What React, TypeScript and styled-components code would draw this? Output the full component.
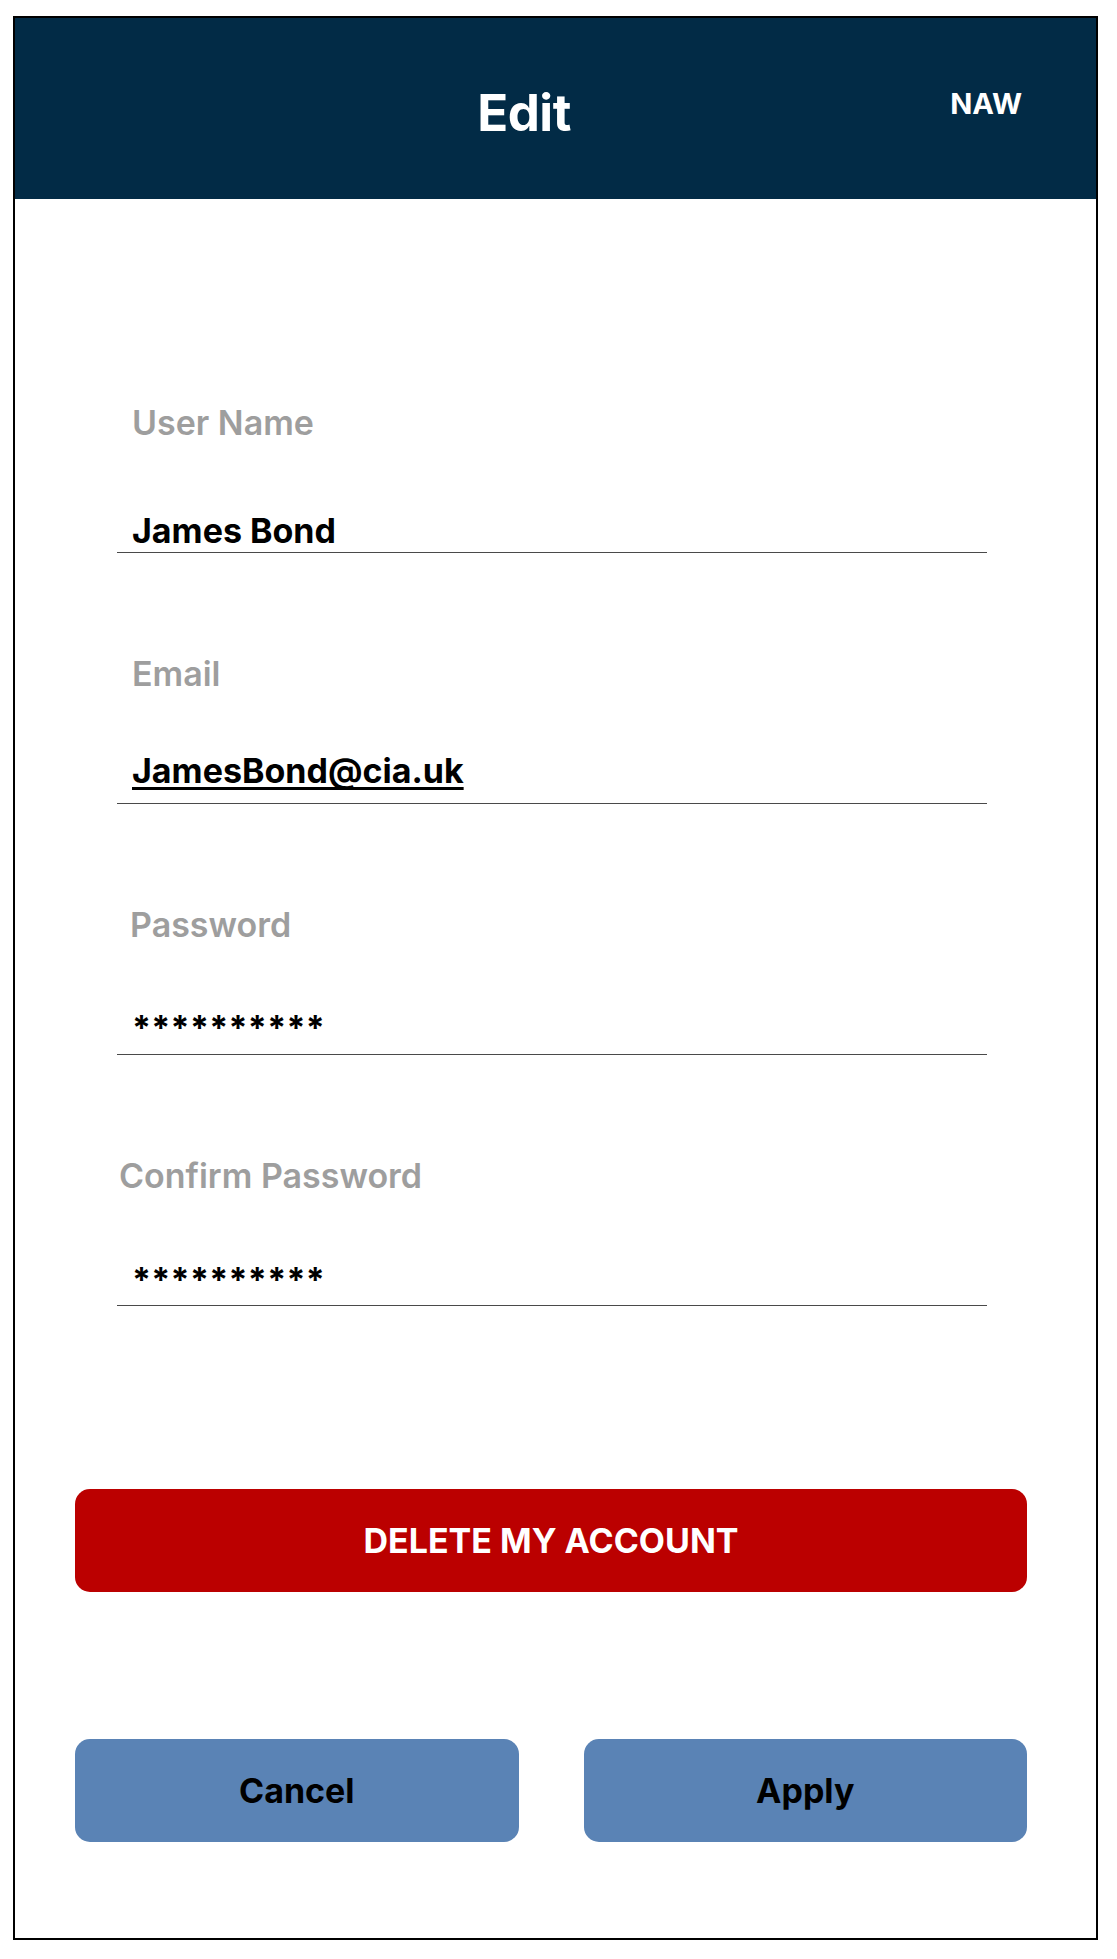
import styled, { createGlobalStyle } from 'styled-components'

const GlobalStyle = createGlobalStyle`
  html, body {
    margin: 0;
    padding: 0;
    background: #ffffff;
  }
  body {
    font-family: Inter, 'Noto Sans', 'Liberation Sans', sans-serif;
  }
`

const Frame = styled.div`
  box-sizing: border-box;
  width: 1085px;
  height: 1924px;
  margin: 16px 0 0 13px;
  border: 2px solid #000;
  display: flex;
  flex-direction: column;
`

const Header = styled.header`
  height: 181px;
  background: #022b46;
  display: grid;
  grid-template-columns: 1fr auto 1fr;
  align-items: center;
  color: #fff;
  flex-shrink: 0;
`

const Title = styled.h1`
  grid-column: 2;
  margin: 7px 63px 0 0;
  font-size: 51px;
  font-weight: 700;
  letter-spacing: -0.5px;
`

const Initials = styled.span`
  grid-column: 3;
  justify-self: end;
  margin: 0 74px 10px 0;
  font-size: 29px;
  font-weight: 700;
`

const Form = styled.form`
  display: flex;
  flex-direction: column;
  padding: 204px 0 0 102px;
`

const Field = styled.div`
  width: 870px;
  display: flex;
  flex-direction: column;
  margin-bottom: 101px;
`

const Label = styled.label<{ $indent: number }>`
  font-size: 34px;
  line-height: 40px;
  font-weight: 600;
  color: #9e9e9e;
  padding-left: ${(p) => p.$indent}px;
  margin-bottom: 69px;
`

// fixed-height row; $lift raises the text above the rule
const Value = styled.div<{ $lift: number; $underline?: boolean; $secret?: boolean }>`
  box-sizing: border-box;
  height: 41px;
  display: flex;
  align-items: flex-end;
  padding: 0 0 ${(p) => p.$lift}px 15px;
  font-size: 34px;
  line-height: 40px;
  font-weight: 700;
  color: #000;
  border-bottom: 1px solid #4a4a4a;
  letter-spacing: ${(p) => (p.$secret ? '0.3px' : 'normal')};
  text-decoration: ${(p) => (p.$underline ? 'underline' : 'none')};
  text-decoration-thickness: 3px;
  text-underline-offset: 4px;
  text-decoration-skip-ink: none;
`

const ButtonArea = styled.div`
  display: flex;
  flex-direction: column;
  padding: 82px 69px 0 60px;
`

const Button = styled.button<{ $tone: 'danger' | 'primary' }>`
  height: 103px;
  border: none;
  border-radius: 15px;
  font-family: inherit;
  font-size: 34px;
  font-weight: 700;
  background: ${(p) => (p.$tone === 'danger' ? '#bb0000' : '#5a83b5')};
  color: ${(p) => (p.$tone === 'danger' ? '#fff' : '#000')};
  cursor: pointer;
`

const ActionRow = styled.div`
  display: grid;
  grid-template-columns: 1fr 1fr;
  gap: 65px;
  margin-top: 147px;
`

const fields = [
  { label: 'User Name', value: 'James Bond', indent: 15, lift: 1 },
  { label: 'Email', value: 'JamesBond@cia.uk', indent: 15, lift: 12, underline: true },
  { label: 'Password', value: '**********', indent: 13, lift: 6, secret: true },
  { label: 'Confirm Password', value: '**********', indent: 2, lift: 5, secret: true },
]

export default function App() {
  return (
    <>
      <GlobalStyle />
      <Frame>
        <Header>
          <Title>Edit</Title>
          <Initials>NAW</Initials>
        </Header>
        <Form onSubmit={(e) => e.preventDefault()}>
          {fields.map((f) => (
            <Field key={f.label}>
              <Label $indent={f.indent}>{f.label}</Label>
              <Value $lift={f.lift} $underline={f.underline} $secret={f.secret}>{f.value}</Value>
            </Field>
          ))}
        </Form>
        <ButtonArea>
          <Button type='button' $tone='danger'>DELETE MY ACCOUNT</Button>
          <ActionRow>
            <Button type='button' $tone='primary'>Cancel</Button>
            <Button type='button' $tone='primary'>Apply</Button>
          </ActionRow>
        </ButtonArea>
      </Frame>
    </>
  )
}
